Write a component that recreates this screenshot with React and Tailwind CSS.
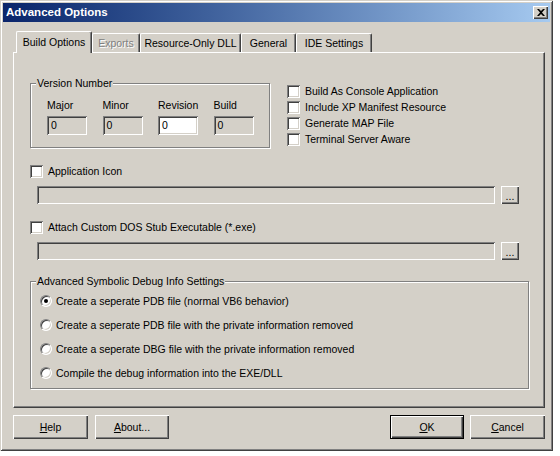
import React from 'react'

const raised = 'shadow-[inset_1px_1px_0_#fff,inset_-1px_-1px_0_#404040,inset_-2px_-2px_0_#808080]'
const sunken = 'shadow-[inset_1px_1px_0_#808080,inset_-1px_-1px_0_#fff,inset_2px_2px_0_#404040,inset_-2px_-2px_0_#d4d0c8]'

function Checkbox({ label }) {
  return (
    <div className="flex items-center h-[16px]">
      <span className={`w-[13px] h-[13px] bg-white shrink-0 ${sunken}`} />
      <span className="ml-[5px]">{label}</span>
    </div>
  )
}

function Radio({ label, checked }) {
  return (
    <div className="flex items-center h-[24px]">
      <span className="w-[12px] h-[12px] rounded-full border border-t-[#808080] border-l-[#808080] border-r-white border-b-white bg-white shadow-[inset_1px_1px_0_#404040,inset_-1px_-1px_0_#d4d0c8] flex items-center justify-center shrink-0">
        {checked && <span className="w-[4px] h-[4px] rounded-full bg-black" />}
      </span>
      <span className="ml-[4px]">{label}</span>
    </div>
  )
}

function GroupBox({ title, className, children }) {
  return (
    <div className={`relative border border-[#808080] shadow-[inset_1px_1px_0_#fff,1px_1px_0_#fff] ${className}`}>
      {/* legend sits over the etched line */}
      <span className="absolute -top-[8px] left-[5px] px-[1px] bg-[#d4d0c8] leading-[14px]">{title}</span>
      {children}
    </div>
  )
}

function Field({ value, white }) {
  return (
    <div className={`w-[40px] h-[19px] flex items-center pl-[4px] ${white ? 'bg-white' : 'bg-[#d4d0c8]'} ${sunken}`}>
      {value}
    </div>
  )
}

function PathRow() {
  return (
    <div className="flex items-center mt-[7px] pl-[7px]">
      <div className={`w-[458px] h-[18px] bg-[#d4d0c8] ${sunken}`} />
      <button className={`ml-[6px] w-[18px] h-[18px] bg-[#d4d0c8] flex items-end justify-center pb-[3px] leading-none ${raised}`}>
        ...
      </button>
    </div>
  )
}

function Tab({ label, selected, disabled, className }) {
  if (selected) {
    return (
      <div className={`relative z-10 h-[22px] -mb-[1px] flex items-center justify-center pb-[1px] bg-[#d4d0c8] border-l border-t border-white border-r border-r-[#404040] rounded-t-[2px] shadow-[inset_-1px_0_0_#808080] ${className}`}>
        {label}
      </div>
    )
  }
  return (
    <div className={`h-[19px] flex items-center justify-center bg-[#d4d0c8] border-l border-t border-white border-r border-r-[#404040] rounded-t-[2px] shadow-[inset_-1px_0_0_#808080] ${className} ${disabled ? 'text-[#808080] [text-shadow:1px_1px_0_#fff]' : ''}`}>
      {label}
    </div>
  )
}

function DlgButton({ children, className, isDefault }) {
  return (
    <button className={`h-[24px] bg-[#d4d0c8] flex items-center justify-center ${isDefault ? 'border border-black' : ''} ${raised} ${className}`}>
      {children}
    </button>
  )
}

export default function App() {
  return (
    <div className="w-[560px] h-[456px] bg-white font-['Liberation_Sans',Arial,sans-serif] text-[10.5px] text-black leading-none select-none">
      {/* Window */}
      <div className="w-[553px] h-[451px] bg-[#d4d0c8] p-[3px] flex flex-col shadow-[inset_1px_1px_0_#d4d0c8,inset_-1px_-1px_0_#404040,inset_2px_2px_0_#fff,inset_-2px_-2px_0_#808080]">
        {/* Title bar */}
        <div className="h-[19px] bg-linear-to-r from-[#0a246a] to-[#a6caf0] flex items-center justify-between pl-[3px] pr-[2px]">
          <span className="text-white font-bold text-[11.5px]">Advanced Options</span>
          <button className={`w-[15px] h-[13px] bg-[#d4d0c8] flex items-center justify-center ${raised}`}>
            <svg width="8" height="7" viewBox="0 0 8 7">
              <path d="M0 0h2l2 2 2-2h2L5 3.5 8 7H6L4 5 2 7H0l3-3.5z" fill="#000" />
            </svg>
          </button>
        </div>

        <div className="pl-[10px] flex flex-col">
          {/* Tabs */}
          <div className="mt-[9px] h-[21px] flex items-end pl-[3px]">
            <Tab label="Build Options" selected className="w-[76px]" />
            <Tab label="Exports" disabled className="w-[48px]" />
            <Tab label="Resource-Only DLL" className="w-[101px]" />
            <Tab label="General" className="w-[55px]" />
            <Tab label="IDE Settings" className="w-[76px]" />
          </div>

          {/* Tab panel */}
          <div className="w-[532px] h-[356px] border-t border-l border-white border-r border-b border-r-[#404040] border-b-[#404040] shadow-[inset_-1px_-1px_0_#808080] pl-[16px] flex flex-col">
            <div className="mt-[30px] flex items-start">
              <GroupBox title="Version Number" className="w-[240px] h-[65px] pl-[16px] pt-[16px]">
                <div className="flex">
                  {[
                    ['Major', false],
                    ['Minor', false],
                    ['Revision', true],
                    ['Build', false],
                  ].map(([label, white]) => (
                    <div key={label} className="w-[55.5px] flex flex-col">
                      <span className="h-[12px]">{label}</span>
                      <div className="mt-[4px]">
                        <Field value="0" white={white} />
                      </div>
                    </div>
                  ))}
                </div>
              </GroupBox>
              <div className="ml-[17px] flex flex-col">
                <Checkbox label="Build As Console Application" />
                <Checkbox label="Include XP Manifest Resource" />
                <Checkbox label="Generate MAP File" />
                <Checkbox label="Terminal Server Aware" />
              </div>
            </div>

            <div className="mt-[15px]">
              <Checkbox label="Application Icon" />
            </div>
            <PathRow />

            <div className="mt-[15px]">
              <Checkbox label="Attach Custom DOS Stub Executable (*.exe)" />
            </div>
            <PathRow />

            <GroupBox title="Advanced Symbolic Debug Info Settings" className="mt-[21px] w-[499px] h-[108px] pl-[9px] pt-[7px]">
              <Radio label="Create a seperate PDB file (normal VB6 behavior)" checked />
              <Radio label="Create a seperate PDB file with the private information removed" />
              <Radio label="Create a seperate DBG file with the private information removed" />
              <Radio label="Compile the debug information into the EXE/DLL" />
            </GroupBox>
          </div>

          {/* Buttons */}
          <div className="w-[532px] mt-[7px] flex">
            <DlgButton className="w-[75px]"><span><span className="underline">H</span>elp</span></DlgButton>
            <DlgButton className="w-[74px] ml-[7px]"><span><span className="underline">A</span>bout...</span></DlgButton>
            <div className="flex-1" />
            <DlgButton isDefault className="w-[74px]"><span><span className="underline">O</span>K</span></DlgButton>
            <DlgButton className="w-[75px] ml-[6px]"><span><span className="underline">C</span>ancel</span></DlgButton>
          </div>
        </div>
      </div>
    </div>
  )
}
